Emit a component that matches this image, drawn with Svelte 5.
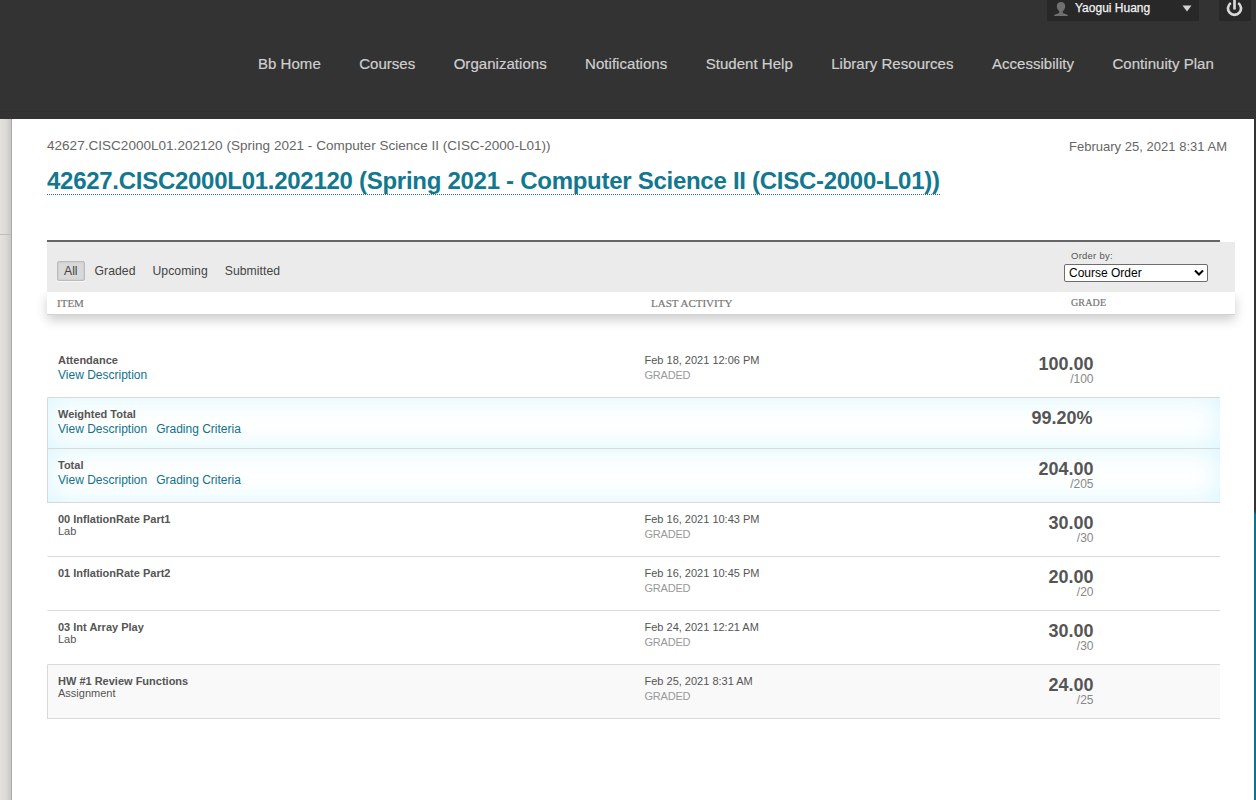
<script>
  const nav = ['Bb Home', 'Courses', 'Organizations', 'Notifications', 'Student Help', 'Library Resources', 'Accessibility', 'Continuity Plan'];
  const filters = ['All', 'Graded', 'Upcoming', 'Submitted'];
  const course = '42627.CISC2000L01.202120 (Spring 2021 - Computer Science II (CISC-2000-L01))';
  const rows = [
    { name: 'Attendance', links: ['View Description'], date: 'Feb 18, 2021 12:06 PM', grade: '100.00', max: '/100' },
    { name: 'Weighted Total', links: ['View Description', 'Grading Criteria'], grade: '99.20%', kind: 'calc short' },
    { name: 'Total', links: ['View Description', 'Grading Criteria'], grade: '204.00', max: '/205', kind: 'calc' },
    { name: '00 InflationRate Part1', type: 'Lab', date: 'Feb 16, 2021 10:43 PM', grade: '30.00', max: '/30' },
    { name: '01 InflationRate Part2', date: 'Feb 16, 2021 10:45 PM', grade: '20.00', max: '/20' },
    { name: '03 Int Array Play', type: 'Lab', date: 'Feb 24, 2021 12:21 AM', grade: '30.00', max: '/30' },
    { name: 'HW #1 Review Functions', type: 'Assignment', date: 'Feb 25, 2021 8:31 AM', grade: '24.00', max: '/25', kind: 'recent' }
  ];
</script>

<div class="page">
  <header>
    <div class="account">
      <div class="user">
        <svg class="person" width="16" height="16" viewBox="0 0 16 16"><path d="M8 1C5.200 1 3.800 2.700 3.800 5c0 2.300 1 4.200 2.400 5.200v1.600C5.500 13.200 1.500 12.700 1 15h14c-.5-2.300-4.500-1.800-5.200-3.200v-1.600c1.400-1 2.400-2.900 2.400-5.200C12.200 2.700 10.800 1 8 1z" fill="#707070" /></svg>
        <span class="username">Yaogui Huang</span>
        <svg class="caret" width="10" height="7" viewBox="0 0 10 7"><path d="M.5.5h9L5 6.500z" fill="#d2d2d2" /></svg>
      </div>
      <div class="power">
        <svg width="20" height="18" viewBox="0 0 20 18" fill="none" stroke="#d8d8d8" stroke-width="2.700"><path d="M5.800 4a6.500 6.500 0 1 0 7.400 0M9.500 0v10.500" /></svg>
      </div>
    </div>
    <nav>{#each nav as item}<a href="#top">{item}</a>{/each}</nav>
  </header>
  <div class="body">
    <aside><div class="upper"></div><div class="lower"></div></aside>
    <main>
      <div class="crumbs"><span class="crumb">{course}</span><time>February 25, 2021 8:31 AM</time></div>
      <h1><span>{course}</span></h1>
      <section>
        <div class="rule"></div>
        <div class="tablehead">
          <div class="filters">
            <div class="tabs">{#each filters as f, i}<button class:active={i === 0}>{f}</button>{/each}</div>
            <div class="order">
              <label for="order">Order by:</label>
              <div class="select" id="order"><span>Course Order</span><svg width="10" height="8" viewBox="0 0 10 8"><path d="M1 1.500 5 5.500 9 1.500" fill="none" stroke="#000" stroke-width="2" /></svg></div>
            </div>
          </div>
          <div class="columns"><span>ITEM</span><span class="c2">LAST ACTIVITY</span><span class="c3">GRADE</span></div>
        </div>
        <div class="rows">
          {#each rows as r}
            <div class="row {r.kind ?? ''}">
              <div class="item">
                <b>{r.name}</b>
                {#if r.type}<div class="type">{r.type}</div>{/if}
                {#if r.links}<div class="links">{#each r.links as l}<a href="#top">{l}</a>{/each}</div>{/if}
              </div>
              <div class="activity">{#if r.date}<div class="date">{r.date}</div><div class="status">GRADED</div>{/if}</div>
              <div class="grade"><strong class:percent={!r.max}>{r.grade}</strong>{#if r.max}<div class="max">{r.max}</div>{/if}</div>
            </div>
          {/each}
        </div>
      </section>
    </main>
    <div class="edge"></div>
  </div>
</div>

<style>
  :global(body) { margin: 0; }
  .page { width: 1256px; height: 800px; overflow: hidden; font-family: "Liberation Sans", Arial, sans-serif; color: #555; display: flex; flex-direction: column; background: #fff; }
  .page * { box-sizing: border-box; white-space: nowrap; }
  a { text-decoration: none; }
  header { height: 119px; flex: none; background: linear-gradient(#333 111px, #2f2f2f 111px, #303030 112px, #333 112px); }
  .account { display: flex; justify-content: flex-end; gap: 20px; padding-right: 5px; height: 21px; }
  .user { width: 152px; background: #282828; display: flex; align-items: flex-start; padding: 0 7px 0 6px; }
  .person { flex: none; margin-top: 1px; }
  .username { color: #f2f2f2; font-size: 12px; line-height: 16px; margin-left: 6px; flex: 1; -webkit-text-stroke: .25px #f2f2f2; }
  .caret { margin-top: 5px; }
  .power { width: 32px; background: #282828; padding-left: 6px; }
  .power svg { display: block; margin-top: -1px; }
  nav { display: flex; gap: 38.400px; padding: 34px 0 0 258px; }
  nav a { font-size: 15px; line-height: 18px; color: #cfcfcf; letter-spacing: .035px; -webkit-text-stroke: .2px #cfcfcf; }
  .body { flex: 1; display: flex; min-height: 0; }
  aside { width: 12px; border-right: 1px solid #aaa; display: flex; flex-direction: column; background: linear-gradient(90deg, #e3e2dd, #dcdbd7 50%, #c8c8c5); }
  .upper { height: 116px; border-bottom: 1px solid #bdbdbd; }
  .lower { flex: 1; }
  main { flex: 1; background: #fff; padding: 18px 0 0 35px; min-width: 0; }
  .edge { width: 2px; background: linear-gradient(#333 391px, #087591 396px); }
  .crumbs { display: flex; justify-content: space-between; padding-right: 27px; font-size: 13px; line-height: 18px; color: #666; }
  .crumb { font-size: 13.500px; letter-spacing: .03px; }
  time { margin-top: 1px; letter-spacing: .02px; }
  h1 { margin: 11px 0 0; font-size: 24px; line-height: 27px; height: 28px; color: #11788f; letter-spacing: -.277px; }
  h1 span { display: inline-block; height: 28px; border-bottom: 1px dotted #11788f; }
  section { margin-top: 45px; }
  .rule { width: 1173px; height: 2px; background: #666; }
  .tablehead { width: 1188px; background: #fff; }
  .filters { height: 50px; background: #ebebeb; display: flex; justify-content: space-between; padding: 0 27px 0 10px; }
  .tabs { display: flex; padding-top: 19px; gap: 3px; }
  button { height: 20px; margin: 0; padding: 0 6px; border: 1px solid transparent; background: none; border-radius: 2px; font: 12.200px/18px "Liberation Sans", Arial, sans-serif; letter-spacing: .05px; color: #444; }
  .active { background: #d9d9d9; border-color: #bbb; box-shadow: inset 0 0 2px #bbb, 0 1px #f8f8f8; letter-spacing: 0; }
  .order { width: 144px; padding-top: 8px; }
  label { display: block; height: 14px; font-size: 9.500px; letter-spacing: .25px; line-height: 12px; padding-left: 7px; color: #555; }
  .select { height: 18px; background: #fff; border: 1px solid #6d6d6d; border-radius: 2px; display: flex; align-items: center; justify-content: space-between; padding: 0 3px 0 4px; color: #000; font-size: 12px; line-height: 16px; }
  .columns { height: 23px; border-bottom: 1px solid #d2d2d2; display: grid; grid-template-columns: 594px 420px 1fr; padding-left: 10px; font: 11px/22px "Liberation Serif", serif; color: #777; -webkit-text-stroke: .2px #777; box-shadow: 0 5px 12px rgba(0,0,0,.2); clip-path: inset(0 -20px -25px -20px); }
  .c3 { font-size: 10px; line-height: 21px; letter-spacing: .15px; }
  .rows { margin-top: 29px; width: 1173px; }
  .row { height: 54px; border-bottom: 1px solid #d9d9d9; border-left: 1px solid transparent; display: grid; grid-template-columns: 586.500px 300px 149px 1fr; padding: 10px 0 0 10px; font-size: 11px; line-height: 12px; }
  .short { height: 51px; }
  .calc { border-left-color: #d9d9d9; box-shadow: inset 0 0 28px #d8f6fd; }
  .recent { border-left-color: #d9d9d9; background: #f9f9f9; }
  b { display: block; color: #555; }
  .type { color: #555; }
  .links { display: flex; gap: 9px; font-size: 12px; line-height: 16px; margin-top: 1px; }
  .links a { color: #11728a; }
  .status { margin-top: 3px; color: #999; letter-spacing: -.2px; }
  .grade { text-align: right; }
  strong { display: block; font-size: 18px; line-height: 20px; }
  .percent { padding-right: 1px; }
  .max { font-size: 12px; line-height: 12px; margin-top: -1px; color: #888; }
</style>
